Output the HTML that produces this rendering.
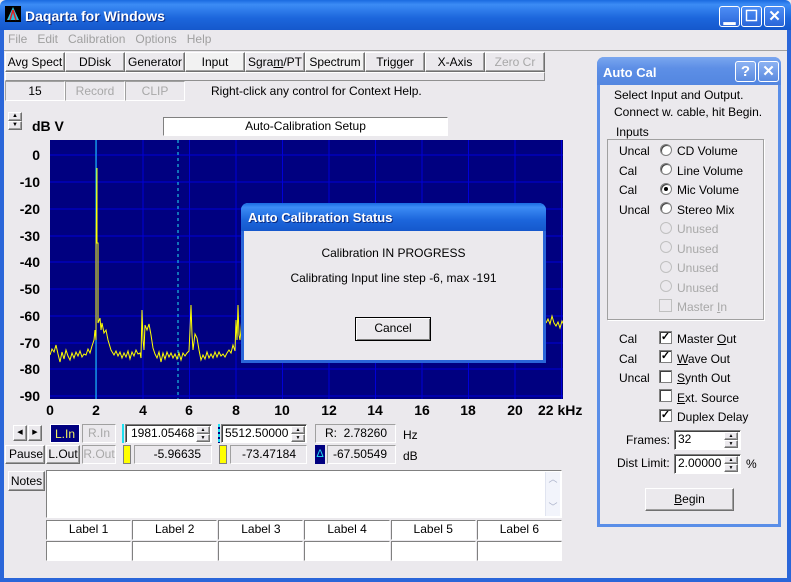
<!DOCTYPE html>
<html><head><meta charset="utf-8"><style>
*{box-sizing:border-box;margin:0;padding:0}
body{width:791px;height:582px;overflow:hidden;background:#ebe9ed;font-family:"Liberation Sans",sans-serif;font-size:12px;color:#000;position:relative}
.a{position:absolute}
.tb{background:linear-gradient(#1a6ae0,#3c8cf5 15%,#1c66dc 60%,#1558cc);}
.btn{position:absolute;background:#ebe9ed;border:1px solid;border-color:#fff #707070 #707070 #fff;box-shadow:inset -1px -1px #a0a0a0;text-align:center;font-size:12px}
.sunk{position:absolute;background:#fff;border:1px solid;border-color:#808080 #fff #fff #808080;box-shadow:inset 1px 1px #404040}
.flat{position:absolute;background:#ebe9ed;border:1px solid;border-color:#a0a0a0 #fff #fff #a0a0a0}
.dis{color:#a8a8a8}
.r{position:absolute;width:12px;height:12px;border-radius:50%;background:#fff;border:1px solid #808080;box-shadow:inset 1px 1px #404040}
.rd{background:#ebe9ed;border-color:#c0c0c0;box-shadow:none}
.cb{position:absolute;width:13px;height:13px;background:#fff;border:1px solid #808080;box-shadow:inset 1px 1px #404040;font-size:11px;line-height:11px;text-align:center;font-weight:bold}
.wb{position:absolute;width:21px;height:21px;border:1px solid #fff;border-radius:3px;background:linear-gradient(#4d8df5,#2a66d9);color:#fff;font-weight:bold;text-align:center;font-size:15px;line-height:19px}
.yl{position:absolute;font:bold 14px "Liberation Sans",sans-serif;text-align:right;width:40px}
.xl{position:absolute;font:bold 14px "Liberation Sans",sans-serif;text-align:center;width:30px;top:402px}
.sp{position:absolute;width:14px;height:8px;font-size:5px;line-height:6px}
</style></head><body>
<div class="a tb" style="left:0;top:0;width:791px;height:30px;border-radius:6px 6px 0 0"></div>
<div class="a" style="left:0;top:30px;width:4px;height:552px;background:#2a66d9"></div>
<div class="a" style="left:787px;top:30px;width:4px;height:552px;background:#2a66d9"></div>
<div class="a" style="left:0;top:578px;width:791px;height:4px;background:#2a66d9"></div>
<div class="a" style="left:5px;top:6px;width:16px;height:16px;background:#000"><svg width="16" height="16"><path d="M8 1L2 14H14Z" fill="#2bc0e0"/><path d="M8 4L5 14M8 4L11 14" stroke="#e02020" stroke-width="1.5"/></svg></div>
<div class="a" style="left:25px;top:8px;color:#fff;font-weight:bold;font-size:14px;text-shadow:1px 1px #0a2a80">Daqarta for Windows</div>
<div class="wb" style="left:719px;top:6px">▁</div>
<div class="wb" style="left:741px;top:6px">☐</div>
<div class="wb" style="left:764px;top:6px">✕</div>
<div class="a" style="left:8px;top:32px;font-size:12px;color:#a0a0a0">File&nbsp;&nbsp;&nbsp;Edit&nbsp;&nbsp;&nbsp;Calibration&nbsp;&nbsp;&nbsp;Options&nbsp;&nbsp;&nbsp;Help</div>
<div class="a" style="left:4px;top:50px;width:783px;height:1px;background:#a0a0a0"></div>
<div class="btn" style="left:5px;top:52px;width:60px;height:20px;line-height:18px;background:#f0eff0">Avg Spect</div>
<div class="btn" style="left:65px;top:52px;width:60px;height:20px;line-height:18px">DDisk</div>
<div class="btn" style="left:125px;top:52px;width:60px;height:20px;line-height:18px">Generator</div>
<div class="btn" style="left:185px;top:52px;width:60px;height:20px;line-height:18px;background:#f2f2f2">Input</div>
<div class="btn" style="left:245px;top:52px;width:60px;height:20px;line-height:18px">Sgra<u>m</u>/PT</div>
<div class="btn" style="left:305px;top:52px;width:60px;height:20px;line-height:18px;background:#f2f2f2">Spectrum</div>
<div class="btn" style="left:365px;top:52px;width:60px;height:20px;line-height:18px">Trigger</div>
<div class="btn" style="left:425px;top:52px;width:60px;height:20px;line-height:18px">X-Axis</div>
<div class="btn dis" style="left:485px;top:52px;width:60px;height:20px;line-height:18px">Zero Cr</div>
<div class="flat" style="left:5px;top:72px;width:540px;height:9px;border-color:#fff #909090 #909090 #fff"></div>
<div class="flat" style="left:5px;top:81px;width:60px;height:20px;text-align:center;line-height:18px">15</div>
<div class="flat dis" style="left:65px;top:81px;width:60px;height:20px;text-align:center;line-height:18px">Record</div>
<div class="flat dis" style="left:125px;top:81px;width:60px;height:20px;text-align:center;line-height:18px">CLIP</div>
<div class="a" style="left:211px;top:84px">Right-click any control for Context Help.</div>
<div class="btn" style="left:8px;top:112px;width:14px;height:9px;font-size:6px;line-height:7px">▲</div>
<div class="btn" style="left:8px;top:121px;width:14px;height:9px;font-size:6px;line-height:7px">▼</div>
<div class="a" style="left:32px;top:118px;font-weight:bold;font-size:14px">dB V</div>
<div class="sunk" style="left:163px;top:117px;width:285px;height:19px;text-align:center;line-height:17px;box-shadow:none">Auto-Calibration Setup</div>
<svg class="a" style="left:50px;top:140px" width="513" height="259">
<rect width="513" height="259" fill="#000080"/>
<g stroke="#0000d8" stroke-width="1">
<path d="M0 15H513M0 42H513M0 69H513M0 96H513M0 122H513M0 149H513M0 176H513M0 203H513M0 229H513M0 256H513"/>
<path d="M46.5 0V259M93 0V259M139.5 0V259M186 0V259M232.5 0V259M279 0V259M325.5 0V259M372 0V259M418.5 0V259M465 0V259M511.5 0V259"/>
</g>
<path d="M46 0V259" stroke="#20e0f0" stroke-width="1"/>
<path d="M128 0V259" stroke="#20e0f0" stroke-width="1" stroke-dasharray="3,3"/>
<path fill="none" stroke="#ffff00" stroke-width="1" d="M0 215 L2 209 L4 212 L6 205 L8 214 L10 222 L12 212 L14 219 L16 210 L18 216 L20 220 L22 213 L24 218 L26 212 L28 216 L30 211 L32 217 L34 214 L36 215 L38 209 L40 213 L42 206 L44 200 L45 190 L46 200 L46 110 L47 28 L47 103 L48 103 L48 183 L50 178 L51 190 L52 183 L54 193 L56 190 L58 200 L61 210 L64 215 L66 211 L68 216 L70 212 L72 218 L74 213 L76 217 L78 211 L80 219 L82 212 L84 216 L86 210 L88 214 L90 213 L91 218 L92 170 L93 200 L94 210 L95 185 L97 190 L99 184 L101 195 L103 208 L105 214 L107 218 L109 212 L111 222 L113 213 L115 219 L117 212 L119 217 L121 213 L123 218 L125 214 L127 219 L129 213 L131 220 L133 213 L135 216 L137 213 L139 211 L140 190 L141 165 L142 195 L143 210 L145 194 L147 198 L149 210 L151 220 L153 215 L155 219 L157 212 L159 218 L161 214 L163 218 L165 212 L167 217 L169 212 L171 216 L173 214 L175 217 L177 213 L179 210 L181 213 L183 205 L185 211 L186 180 L187 200 L188 165 L189 195 L190 200 L191 190 L192 175"/>
<path fill="none" stroke="#ffff00" stroke-width="1" d="M496 183l2-4 2 5 2-8 2 7 2 3 2-4 2 6 2-7 2 4 2-2 2 5"/>
</svg>
<div class="yl" style="left:0;top:147px">0</div>
<div class="yl" style="left:0;top:174px">-10</div>
<div class="yl" style="left:0;top:201px">-20</div>
<div class="yl" style="left:0;top:228px">-30</div>
<div class="yl" style="left:0;top:254px">-40</div>
<div class="yl" style="left:0;top:281px">-50</div>
<div class="yl" style="left:0;top:308px">-60</div>
<div class="yl" style="left:0;top:335px">-70</div>
<div class="yl" style="left:0;top:361px">-80</div>
<div class="yl" style="left:0;top:388px">-90</div>
<div class="xl" style="left:35px">0</div>
<div class="xl" style="left:81px">2</div>
<div class="xl" style="left:128px">4</div>
<div class="xl" style="left:174px">6</div>
<div class="xl" style="left:221px">8</div>
<div class="xl" style="left:267px">10</div>
<div class="xl" style="left:314px">12</div>
<div class="xl" style="left:360px">14</div>
<div class="xl" style="left:407px">16</div>
<div class="xl" style="left:453px">18</div>
<div class="xl" style="left:500px">20</div>
<div class="a" style="left:538px;top:402px;font:bold 14px 'Liberation Sans',sans-serif;white-space:nowrap">22 kHz</div>
<div class="a" style="left:241px;top:203px;width:305px;height:160px;border:3px solid #2a66d9;border-top:0;border-radius:7px 7px 0 0;background:#ebe9ed">
<div class="a tb" style="left:-3px;top:0;width:305px;height:28px;border-radius:7px 7px 0 0"></div>
<div class="a" style="left:4px;top:7px;color:#fff;font-weight:bold;font-size:13px;text-shadow:1px 1px #0a2a80">Auto Calibration Status</div>
<div class="a" style="left:0;top:43px;width:299px;text-align:center">Calibration IN PROGRESS</div>
<div class="a" style="left:0;top:68px;width:299px;text-align:center">Calibrating Input line step -6, max -191</div>
<div class="btn" style="left:111px;top:114px;width:76px;height:24px;line-height:20px;border:1px solid #000;box-shadow:inset 1px 1px #fff,inset -1px -1px #808080">Cancel</div>
</div>
<div class="btn" style="left:13px;top:425px;width:14px;height:16px;font-size:7px;line-height:14px">◀</div>
<div class="btn" style="left:28px;top:425px;width:14px;height:16px;font-size:7px;line-height:14px">▶</div>
<div class="a" style="left:50px;top:424px;width:30px;height:19px;background:#000080;color:#f0f060;text-align:center;line-height:18px;font-size:12px;border:1px solid #fff">L.In</div>
<div class="flat dis" style="left:82px;top:424px;width:34px;height:19px;text-align:center;line-height:17px">R.In</div>
<div class="btn" style="left:5px;top:445px;width:40px;height:19px;line-height:17px;text-align:right;padding-right:1px">Pause</div>
<div class="btn" style="left:46px;top:445px;width:34px;height:19px;line-height:17px">L.Out</div>
<div class="flat dis" style="left:82px;top:445px;width:34px;height:19px;text-align:center;line-height:17px">R.Out</div>
<div class="a" style="left:122px;top:424px;width:2px;height:19px;background:#20e0f0"></div>
<div class="sunk" style="left:125px;top:424px;width:87px;height:19px;padding-left:5px;line-height:17px">1981.05468</div>
<div class="btn sp" style="left:196px;top:426px">▲</div>
<div class="btn sp" style="left:196px;top:434px">▼</div>
<div class="a" style="left:218px;top:424px;width:2px;height:19px;background:repeating-linear-gradient(#20e0f0 0 3px,#000080 3px 5px)"></div>
<div class="sunk" style="left:221px;top:424px;width:86px;height:19px;padding-left:3px;line-height:17px">5512.50000</div>
<div class="btn sp" style="left:291px;top:426px">▲</div>
<div class="btn sp" style="left:291px;top:434px">▼</div>
<div class="a" style="left:123px;top:445px;width:8px;height:19px;background:#ffff00;border:1px solid #808080"></div>
<div class="flat" style="left:134px;top:445px;width:78px;height:19px;text-align:right;padding-right:10px;line-height:17px">-5.96635</div>
<div class="a" style="left:219px;top:445px;width:8px;height:19px;background:#ffff00;border:1px solid #808080"></div>
<div class="flat" style="left:230px;top:445px;width:77px;height:19px;text-align:right;padding-right:10px;line-height:17px">-73.47184</div>
<div class="flat" style="left:315px;top:424px;width:81px;height:19px;text-align:right;padding-right:8px;line-height:17px">R:&nbsp; 2.78260</div>
<div class="a" style="left:403px;top:428px">Hz</div>
<div class="a" style="left:315px;top:445px;width:10px;height:19px;background:#000080;color:#20e0f0;font-size:11px;text-align:center;line-height:18px">Δ</div>
<div class="flat" style="left:327px;top:445px;width:69px;height:19px;text-align:right;padding-right:8px;line-height:17px">-67.50549</div>
<div class="a" style="left:403px;top:449px">dB</div>
<div class="btn" style="left:8px;top:471px;width:37px;height:20px;line-height:18px">Notes</div>
<div class="sunk" style="left:46px;top:470px;width:516px;height:48px;box-shadow:none"></div>
<div class="a" style="left:545px;top:472px;width:15px;height:44px;background:#f2f4fb;border-left:1px solid #e0e4f0;color:#a8b0c8;font-size:9px;text-align:center;line-height:14px">︿<br><br>﹀</div>
<div class="a" style="left:46px;top:520px;width:516px;height:41px;display:grid;grid-template-columns:repeat(6,1fr);grid-template-rows:20px 20px;gap:1px">
<div class="sunk" style="position:relative;text-align:center;line-height:16px;box-shadow:none">Label 1</div><div class="sunk" style="position:relative;text-align:center;line-height:16px;box-shadow:none">Label 2</div><div class="sunk" style="position:relative;text-align:center;line-height:16px;box-shadow:none">Label 3</div><div class="sunk" style="position:relative;text-align:center;line-height:16px;box-shadow:none">Label 4</div><div class="sunk" style="position:relative;text-align:center;line-height:16px;box-shadow:none">Label 5</div><div class="sunk" style="position:relative;text-align:center;line-height:16px;box-shadow:none">Label 6</div>
<div class="sunk" style="position:relative;box-shadow:none"></div><div class="sunk" style="position:relative;box-shadow:none"></div><div class="sunk" style="position:relative;box-shadow:none"></div><div class="sunk" style="position:relative;box-shadow:none"></div><div class="sunk" style="position:relative;box-shadow:none"></div><div class="sunk" style="position:relative;box-shadow:none"></div>
</div>
<div class="a" style="left:597px;top:57px;width:184px;height:470px;border:3px solid #5a8ee8;border-top:0;border-radius:7px 7px 0 0;background:#ebe9ed">
<div class="a" style="left:-3px;top:0;width:184px;height:28px;border-radius:7px 7px 0 0;background:linear-gradient(#7aa6ef,#5d8fe6 40%,#5386e0)"></div>
<div class="a" style="left:3px;top:8px;color:#fff;font-weight:bold;font-size:13px">Auto Cal</div>
<div class="wb" style="left:135px;top:4px;background:linear-gradient(#8cb2f2,#5b8be0)">?</div>
<div class="wb" style="left:158px;top:4px;background:linear-gradient(#8cb2f2,#5b8be0)">✕</div>
</div>
<div class="a" style="left:614px;top:88px">Select Input and Output.</div>
<div class="a" style="left:614px;top:105px">Connect w. cable, hit Begin.</div>
<div class="a" style="left:607px;top:139px;width:157px;height:181px;border:1px solid #a0a0a0;box-shadow:1px 1px #fff"></div>
<div class="a" style="left:614px;top:125px;background:#ebe9ed;padding:0 2px">Inputs</div>
<div class="a" style="left:619px;top:142px;line-height:19.5px">Uncal<br>Cal<br>Cal<br>Uncal</div>
<div class="r" style="left:660px;top:144px"></div>
<div class="r" style="left:660px;top:163px"></div>
<div class="r" style="left:660px;top:183px"><div style="width:4px;height:4px;background:#000;border-radius:50%;margin:3px"></div></div>
<div class="r" style="left:660px;top:202px"></div>
<div class="r rd" style="left:660px;top:222px"></div>
<div class="r rd" style="left:660px;top:241px"></div>
<div class="r rd" style="left:660px;top:261px"></div>
<div class="r rd" style="left:660px;top:280px"></div>
<div class="cb" style="left:659px;top:299px;background:#ebe9ed;border-color:#c0c0c0;box-shadow:none"></div>
<div class="a" style="left:677px;top:142px;line-height:19.5px">CD Volume<br>Line Volume<br>Mic Volume<br>Stereo Mix<br><span class="dis">Unused<br>Unused<br>Unused<br>Unused<br>Master <u>I</u>n</span></div>
<div class="a" style="left:619px;top:330px;line-height:19.5px">Cal<br>Cal<br>Uncal</div>
<div class="cb" style="left:659px;top:331px">✓</div>
<div class="cb" style="left:659px;top:350px">✓</div>
<div class="cb" style="left:659px;top:370px"></div>
<div class="cb" style="left:659px;top:389px"></div>
<div class="cb" style="left:659px;top:409px">✓</div>
<div class="a" style="left:677px;top:330px;line-height:19.5px">Master <u>O</u>ut<br><u>W</u>ave Out<br><u>S</u>ynth Out<br><u>E</u>xt. Source<br>Duplex Delay</div>
<div class="a" style="left:626px;top:433px">Frames:</div>
<div class="sunk" style="left:674px;top:430px;width:67px;height:20px;padding-left:3px;line-height:17px">32</div>
<div class="btn sp" style="left:724px;top:432px">▲</div>
<div class="btn sp" style="left:724px;top:440px">▼</div>
<div class="a" style="left:617px;top:456px">Dist Limit:</div>
<div class="sunk" style="left:674px;top:454px;width:67px;height:20px;padding-left:3px;line-height:17px">2.00000</div>
<div class="btn sp" style="left:724px;top:456px">▲</div>
<div class="btn sp" style="left:724px;top:464px">▼</div>
<div class="a" style="left:746px;top:457px">%</div>
<div class="btn" style="left:645px;top:488px;width:89px;height:23px;line-height:21px"><u>B</u>egin</div>
</body></html>
